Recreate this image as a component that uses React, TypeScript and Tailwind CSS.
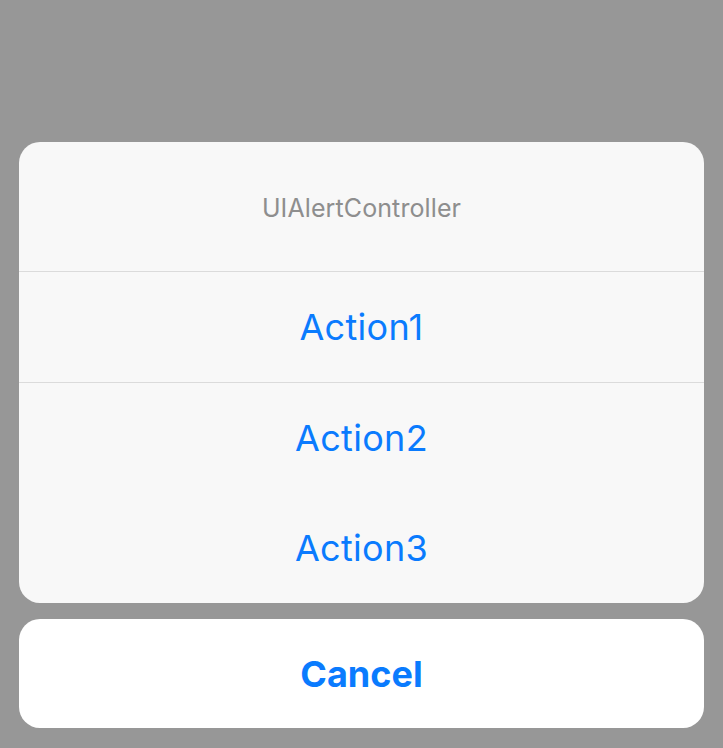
export default function App() {
  const actions = ["Action1", "Action2", "Action3"];

  return (
    <div
      className="h-[748px] w-full bg-[#979797] flex flex-col px-[19px] pt-[142px]"
      style={{ fontFamily: "Inter, 'Noto Sans', sans-serif" }}
    >
      <div className="rounded-[21px] bg-[#f8f8f8] overflow-hidden">
        <div className="h-[129px] flex items-center justify-center border-b border-[#dbdbdb] box-content">
          <span className="pt-[4px] text-[25px] text-[#8e8e8e] tracking-[0.1px]">UIAlertController</span>
        </div>
        {actions.map((label, i) => (
          <button
            key={label}
            className={
              "w-full h-[110px] flex items-center justify-center text-[36px] tracking-[0.3px] text-[#0a7bfe] box-content " +
              (i === 0 ? "border-b border-[#dbdbdb]" : "")
            }
          >
            {label}
          </button>
        ))}
      </div>

      <button className="mt-[16px] h-[109px] rounded-[21px] bg-white flex items-center justify-center text-[36px] font-bold text-[#0a7bfe]">
        Cancel
      </button>
    </div>
  );
}
